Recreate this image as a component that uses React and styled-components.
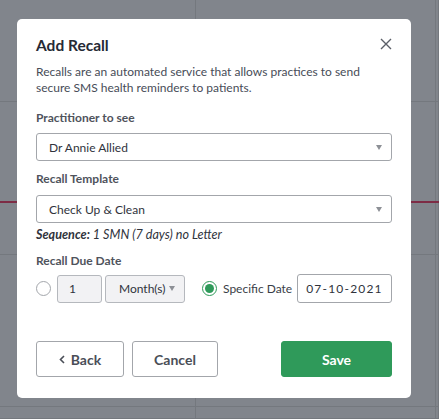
import React, { useState } from "react";
import styled, { createGlobalStyle } from "styled-components";

const GlobalStyle = createGlobalStyle`
  html, body {
    margin: 0;
    padding: 0;
    width: 439px;
    height: 419px;
    overflow: hidden;
    font-family: Lato, "Noto Sans", sans-serif;
  }
`;

// calendar behind the overlay
const Backdrop = styled.div`
  position: relative;
  width: 439px;
  height: 419px;
  background: #81858c;
  display: grid;
  grid-template-columns: 196px 240px 3px;
  grid-template-rows: 102px 100px 53px 152px 12px;
  overflow: hidden;
`;

const Cell = styled.div`
  border-right: 1px solid #74787e;
  border-bottom: 1px solid #74787e;
  box-sizing: border-box;
`;

const NowLine = styled.div`
  position: absolute;
  left: 0;
  right: 0;
  top: 201px;
  height: 2px;
  background: #7d2c45;
`;

const Modal = styled.div`
  position: absolute;
  left: 17px;
  top: 19px;
  width: 394px;
  height: 379px;
  box-sizing: border-box;
  background: #fff;
  border-radius: 5px;
  padding: 16px 19px 21px 19px;
  display: flex;
  flex-direction: column;
`;

const Header = styled.div`
  display: flex;
  justify-content: space-between;
  align-items: flex-start;
`;

const Title = styled.h2`
  margin: 0;
  font-size: 15.5px;
  line-height: 20px;
  font-weight: 700;
  color: #262a35;
`;

const Close = styled.button`
  border: none;
  background: none;
  padding: 0;
  margin-top: 3px;
  width: 12px;
  height: 12px;
  display: flex;
  cursor: pointer;
`;

const Desc = styled.p`
  margin: 9px 0 0 0;
  font-size: 12px;
  line-height: 16px;
  color: #474c57;
`;

const Label = styled.div`
  margin-top: ${(p) => p.$mt || 14}px;
  font-size: 12px;
  line-height: 16px;
  font-weight: 700;
  color: #4f535c;
`;

const SelectBox = styled.div`
  margin-top: ${(p) => p.$mt || 7}px;
  height: 28px;
  box-sizing: border-box;
  border: 1px solid #a3a6ab;
  border-radius: 3px;
  display: flex;
  align-items: center;
  justify-content: space-between;
  padding: 0 9px 0 12px;
  font-size: 12px;
  color: #2f333c;
  background: #fff;
`;

const Caret = styled.span`
  width: 0;
  height: 0;
  flex-shrink: 0;
  border-left: 3.5px solid transparent;
  border-right: 3.5px solid transparent;
  border-top: 5px solid #8d9096;
`;

const Sequence = styled.div`
  margin-top: 4px;
  font-size: 12.6px;
  line-height: 15px;
  font-style: italic;
  color: #2f333c;

  b {
    font-weight: 700;
  }
`;

const DueRow = styled.div`
  margin-top: 5px;
  display: flex;
  align-items: center;
  height: 29px;
  white-space: nowrap;
`;

const Radio = styled.span`
  width: 15px;
  height: 15px;
  box-sizing: border-box;
  border-radius: 50%;
  border: 1px solid ${(p) => (p.$on ? "#2f9a5a" : "#a3a6ab")};
  display: flex;
  align-items: center;
  justify-content: center;
  flex-shrink: 0;
  margin-right: ${(p) => p.$mr}px;

  &::after {
    content: "";
    display: ${(p) => (p.$on ? "block" : "none")};
    width: 9px;
    height: 9px;
    border-radius: 50%;
    background: #2f9a5a;
  }
`;

const GrayField = styled.div`
  width: ${(p) => p.$w}px;
  height: 28px;
  flex-shrink: 0;
  box-sizing: border-box;
  border: 1px solid #b5b8bd;
  border-radius: 3px;
  background: #f2f2f4;
  display: flex;
  align-items: center;
  justify-content: space-between;
  padding: 0 ${(p) => p.$pr || 0}px 0 ${(p) => p.$pl}px;
  margin-right: ${(p) => p.$mr}px;
  font-size: 12px;
  color: #2f333c;
`;

const RadioText = styled.span`
  flex-shrink: 0;
  font-size: 12px;
  color: #3a3e47;
`;

const DateField = styled.div`
  width: 95px;
  height: 29px;
  flex-shrink: 0;
  margin-left: auto;
  box-sizing: border-box;
  border: 1px solid #a3a6ab;
  border-radius: 3px;
  display: flex;
  align-items: center;
  justify-content: center;
  font-size: 12px;
  letter-spacing: 1.2px;
  color: #2f333c;
`;

const Footer = styled.div`
  margin-top: auto;
  display: flex;
  align-items: center;
`;

const Button = styled.button`
  width: ${(p) => p.$w}px;
  height: 36px;
  flex-shrink: 0;
  box-sizing: border-box;
  border-radius: 3px;
  font-family: Lato, "Noto Sans", sans-serif;
  font-size: 14px;
  font-weight: 700;
  display: flex;
  align-items: center;
  justify-content: center;
  gap: 6px;
  margin-right: ${(p) => p.$mr || 0}px;
  border: 1px solid ${(p) => (p.$primary ? "#2f9a5a" : "#a3a6ab")};
  background: ${(p) => (p.$primary ? "#2f9a5a" : "#fff")};
  color: ${(p) => (p.$primary ? "#fff" : "#4a4e57")};
  cursor: pointer;
`;

const Spacer = styled.div`
  flex: 1;
`;

const cells = Array.from({ length: 15 });

export default function App() {
  const [mode, setMode] = useState("date");

  return (
    <>
      <GlobalStyle />
      <Backdrop>
        {cells.map((_, i) => (
          <Cell key={i} />
        ))}
        <NowLine />
        <Modal>
          <Header>
            <Title>Add Recall</Title>
            <Close aria-label="Close">
              <svg width="12" height="12" viewBox="0 0 12 12">
                <path d="M1 1 L11 11 M11 1 L1 11" stroke="#5b5f68" strokeWidth="1.4" fill="none" />
              </svg>
            </Close>
          </Header>
          <Desc>
            Recalls are an automated service that allows practices to send
            <br />
            secure SMS health reminders to patients.
          </Desc>

          <Label>Practitioner to see</Label>
          <SelectBox>
            Dr Annie Allied
            <Caret />
          </SelectBox>

          <Label $mt={10}>Recall Template</Label>
          <SelectBox $mt={8}>
            Check Up &amp; Clean
            <Caret />
          </SelectBox>
          <Sequence>
            <b>Sequence:</b> 1 SMN (7 days) no Letter
          </Sequence>

          <Label $mt={11}>Recall Due Date</Label>
          <DueRow>
            <Radio $mr={6} $on={mode === "interval"} onClick={() => setMode("interval")} />
            <GrayField $w={45} $pl={11} $mr={3}>1</GrayField>
            <GrayField $w={80} $pl={13} $pr={9} $mr={17}>
              Month(s)
              <Caret />
            </GrayField>
            <Radio $mr={6} $on={mode === "date"} onClick={() => setMode("date")} />
            <RadioText>Specific Date</RadioText>
            <DateField>07-10-2021</DateField>
          </DueRow>

          <Footer>
            <Button $w={88} $mr={8}>
              <svg width="6" height="9" viewBox="0 0 6 9">
                <path d="M5 1 L1.5 4.5 L5 8" stroke="#4a4e57" strokeWidth="1.6" fill="none" />
              </svg>
              Back
            </Button>
            <Button $w={86}>Cancel</Button>
            <Spacer />
            <Button $w={111} $primary>
              Save
            </Button>
          </Footer>
        </Modal>
      </Backdrop>
    </>
  );
}
